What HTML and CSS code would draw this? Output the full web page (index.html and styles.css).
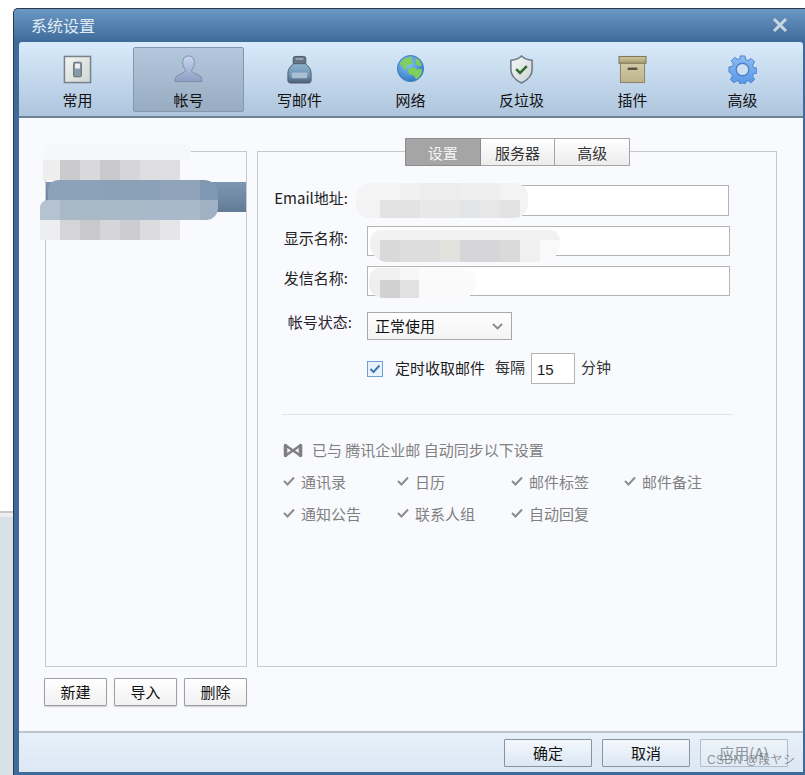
FILE: index.html
```html
<!DOCTYPE html>
<html lang="zh-CN">
<head>
<meta charset="utf-8">
<title>系统设置</title>
<link rel="stylesheet" href="styles.css">
</head>
<body>
<div class="backdrop"></div>
<div class="window">
  <header class="titlebar">
    <span class="title">系统设置</span>
    <svg class="close" width="16" height="16" viewBox="0 0 16 16"><path d="M2 2L14 14M14 2L2 14" stroke="#c8d6e3" stroke-width="3" fill="none"/></svg>
  </header>
  <nav class="toolbar">
    <div class="tool">
      <svg width="30" height="30" viewBox="0 0 30 30">
        <defs><linearGradient id="sw" x1="0" y1="0" x2="1" y2="1"><stop offset="0" stop-color="#f3f5f0"/><stop offset="1" stop-color="#cfd6d2"/></linearGradient></defs>
        <rect x="1.500" y="1.500" width="27" height="27" fill="url(#sw)" stroke="#78828e" stroke-width="1.600"/>
        <rect x="11" y="7.500" width="8" height="15" rx="1" fill="#8b9aa8" stroke="#5a6875"/>
        <rect x="12.500" y="9" width="5" height="5" fill="#eef1f2"/>
      </svg>
      <span>常用</span>
    </div>
    <div class="tool active">
      <svg width="30" height="30" viewBox="0 0 30 30">
        <defs><linearGradient id="us" x1="0" y1="0" x2="0" y2="1"><stop offset="0" stop-color="#c9d6f0"/><stop offset="1" stop-color="#8b9fc4"/></linearGradient></defs>
        <path d="M15 1c4 0 6 3 6 7 0 3-1 5-2.500 7-.7 1.500 0 2.500 2 3.500l6 3c2 1 2.500 3 2.500 6H1c0-3 .5-5 2.500-6l6-3c2-1 2.700-2 2-3.500C10 13 9 11 9 8c0-4 2-7 6-7z" fill="url(#us)" stroke="#7c8ba6"/>
      </svg>
      <span>帐号</span>
    </div>
    <div class="tool">
      <svg width="30" height="30" viewBox="0 0 30 30">
        <defs><linearGradient id="ink" x1="0" y1="0" x2="0" y2="1"><stop offset="0" stop-color="#8db4d0"/><stop offset=".6" stop-color="#6f93b0"/><stop offset="1" stop-color="#4b6078"/></linearGradient></defs>
        <rect x="8.500" y="1.500" width="13" height="9" rx="2" fill="#66748a" stroke="#4d586a"/>
        <rect x="11" y="3" width="8" height="2" fill="#9aa6b6"/>
        <path d="M9 9h12c4 3 6 6 6 10v7c0 2-1 3-3 3H6c-2 0-3-1-3-3v-7c0-4 2-7 6-10z" fill="url(#ink)" stroke="#505b6c"/>
        <rect x="7" y="18" width="16" height="6" rx="1" fill="#a9c0d2"/>
      </svg>
      <span>写邮件</span>
    </div>
    <div class="tool">
      <svg width="30" height="30" viewBox="0 0 30 30">
        <defs><radialGradient id="gl" cx=".4" cy=".3" r=".8"><stop offset="0" stop-color="#8cc4f2"/><stop offset="1" stop-color="#2670c4"/></radialGradient></defs>
        <circle cx="15" cy="14" r="13.500" fill="url(#gl)" stroke="#3d78b4"/>
        <path d="M4 9c3-5 7-7 12-7 1 2-1 4 1 5 2 2-2 3-4 3-3 0-2 2-2 4-1 3-3 0-4-2-1-1-2-1-3-3zM20 3c3 1 5 3 6 6 1 2 0 3-2 2-2 0-3-1-3-2-1-2 0-3-1-6zM13 14c3-2 8-1 9 1 2 0 4-1 5 0 0 4-2 8-6 10-2-1-1-3-3-4-2 0-5-1-5-3-1-2-1-3 0-4z" fill="#7ed05a"/>
      </svg>
      <span>网络</span>
    </div>
    <div class="tool">
      <svg width="30" height="30" viewBox="0 0 30 30">
        <defs><linearGradient id="sh" x1="0" y1="0" x2="1" y2="1"><stop offset="0" stop-color="#f7f9f6"/><stop offset="1" stop-color="#ccd3d6"/></linearGradient></defs>
        <path d="M15 1c3 3 7 4 11 4.500V15c0 7-5 11-11 14C9 26 4 22 4 15V5.500C8 5 12 4 15 1z" fill="url(#sh)" stroke="#6f7b88" stroke-width="1.600"/>
        <path d="M9.500 14.500l4 4 7-7" fill="none" stroke="#2f6b2c" stroke-width="2.600"/>
      </svg>
      <span>反垃圾</span>
    </div>
    <div class="tool">
      <svg width="30" height="30" viewBox="0 0 30 30">
        <defs>
          <linearGradient id="bx" x1="0" y1="0" x2="0" y2="1"><stop offset="0" stop-color="#d4ccaa"/><stop offset="1" stop-color="#bdb38b"/></linearGradient>
          <linearGradient id="lid" x1="0" y1="0" x2="0" y2="1"><stop offset="0" stop-color="#cfc79f"/><stop offset="1" stop-color="#a89d72"/></linearGradient>
        </defs>
        <rect x="2.500" y="7" width="25" height="21.500" fill="url(#bx)" stroke="#8a8263"/>
        <rect x="1" y="1.500" width="28" height="7" fill="url(#lid)" stroke="#7a7255"/>
        <rect x="10" y="13" width="10" height="2.500" fill="#55523f"/>
      </svg>
      <span>插件</span>
    </div>
    <div class="tool tool-last">
      <svg width="30" height="30" viewBox="0 0 30 30">
        <defs><linearGradient id="gr" x1="0" y1="0" x2="0" y2="1"><stop offset="0" stop-color="#8fbdf2"/><stop offset="1" stop-color="#5595e6"/></linearGradient></defs>
        <path d="M12.500 1h5l.8 3.800 2.400 1 3.300-2.100 3.500 3.500-2.100 3.300 1 2.400 3.600.8v5l-3.600.8-1 2.400 2.100 3.300-3.500 3.500-3.300-2.100-2.400 1-.8 3.400h-5l-.8-3.400-2.400-1-3.300 2.100-3.500-3.500 2.100-3.300-1-2.400L1 17.500v-5l3.600-.8 1-2.400-2.100-3.300L7 2.500l3.300 2.200 2.400-1z" fill="url(#gr)" stroke="#4a80cc" stroke-linejoin="round"/>
        <circle cx="15" cy="15" r="6.500" fill="#cfdff0" stroke="#4a80cc" stroke-width="1.400"/>
      </svg>
      <span>高级</span>
    </div>
  </nav>
  <main class="content">
    <section class="accounts">
      <div class="account-list"><div class="account-row"></div></div>
      <div class="account-actions">
        <button class="btn btn-small">新建</button>
        <button class="btn btn-small">导入</button>
        <button class="btn btn-small">删除</button>
      </div>
    </section>
    <section class="panel">
      <div class="tabs">
        <div class="tab tab-on">设置</div>
        <div class="tab">服务器</div>
        <div class="tab">高级</div>
      </div>
      <div class="row row-email"><label class="lab lab-email">Email地址:</label><div class="field"></div></div>
      <div class="row"><label class="lab">显示名称:</label><div class="field"></div></div>
      <div class="row"><label class="lab">发信名称:</label><div class="field"></div></div>
      <div class="row row-status">
        <label class="lab lab-status">帐号状态:</label>
        <div class="select">正常使用
          <svg width="11" height="7" viewBox="0 0 11 7"><path d="M1 1l4.500 4.500L10 1" fill="none" stroke="#8a8a8a" stroke-width="1.800"/></svg>
        </div>
      </div>
      <div class="row row-timer">
        <svg class="checkbox" width="16" height="16" viewBox="0 0 16 16"><rect x=".5" y=".5" width="15" height="15" fill="#eaf2fb" stroke="#6d9fd6"/><path d="M3.500 8l3 3 6-6.500" fill="none" stroke="#3d78bb" stroke-width="2"/></svg>
        <span class="timer-label">定时收取邮件</span>
        <span class="timer-every">每隔</span>
        <div class="minutes">15</div>
        <span class="timer-unit">分钟</span>
      </div>
      <hr class="divider">
      <div class="sync-head">
        <svg width="20" height="15" viewBox="0 0 20 15"><path d="M2.500 2.500V12.500M17.500 2.500V12.500" stroke="#808080" stroke-width="3.600" fill="none" stroke-linecap="round"/><path d="M2 2l16 11M18 2L2 13" stroke="#808080" stroke-width="2.400" fill="none"/></svg>
        <span>已与 腾讯企业邮 自动同步以下设置</span>
      </div>
      <ul class="sync-grid">
        <li><svg class="tick" width="12" height="10" viewBox="0 0 12 10"><path d="M1 5l3.500 3.500L11 1.500" fill="none" stroke="#8c8c8c" stroke-width="2"/></svg>通讯录</li>
        <li><svg class="tick" width="12" height="10" viewBox="0 0 12 10"><path d="M1 5l3.500 3.500L11 1.500" fill="none" stroke="#8c8c8c" stroke-width="2"/></svg>日历</li>
        <li><svg class="tick" width="12" height="10" viewBox="0 0 12 10"><path d="M1 5l3.500 3.500L11 1.500" fill="none" stroke="#8c8c8c" stroke-width="2"/></svg>邮件标签</li>
        <li><svg class="tick" width="12" height="10" viewBox="0 0 12 10"><path d="M1 5l3.500 3.500L11 1.500" fill="none" stroke="#8c8c8c" stroke-width="2"/></svg>邮件备注</li>
        <li><svg class="tick" width="12" height="10" viewBox="0 0 12 10"><path d="M1 5l3.500 3.500L11 1.500" fill="none" stroke="#8c8c8c" stroke-width="2"/></svg>通知公告</li>
        <li><svg class="tick" width="12" height="10" viewBox="0 0 12 10"><path d="M1 5l3.500 3.500L11 1.500" fill="none" stroke="#8c8c8c" stroke-width="2"/></svg>联系人组</li>
        <li><svg class="tick" width="12" height="10" viewBox="0 0 12 10"><path d="M1 5l3.500 3.500L11 1.500" fill="none" stroke="#8c8c8c" stroke-width="2"/></svg>自动回复</li>
      </ul>
    </section>
  </main>
  <footer class="footer">
    <button class="btn btn-wide">确定</button>
    <button class="btn btn-wide">取消</button>
    <button class="btn btn-wide btn-off">应用(A)</button>
  </footer>
</div>
<div class="mosaic m-a1"></div>
<div class="mosaic m-a2"></div>
<div class="mosaic m-a3"></div>
<div class="mosaic m-a4"></div>
<div class="mosaic m-a5"></div>
<div class="mosaic m-e1"></div>
<div class="mosaic m-e2"></div>
<div class="mosaic m-d1"></div>
<div class="mosaic m-d2"></div>
<div class="mosaic m-s1"></div>
<div class="mosaic m-s2"></div>
<div class="watermark">CSDN @段ヤシ</div>
</body>
</html>
```

FILE: styles.css
```css
* { box-sizing: border-box; }
html, body { margin: 0; padding: 0; height: 775px; overflow: hidden; background: #fff; }
body {
  position: relative;
  font: 15px/20px "Noto Sans CJK SC", "Liberation Sans", sans-serif;
  color: #1c1c1c;
}
.backdrop {
  position: absolute; left: 0; top: 511px; width: 13px; height: 264px;
  background: #d9e1e8;
  border-top: 2px solid #c8c8c8;
  box-shadow: inset 0 4px 0 #eeeeee;
}
.window {
  position: absolute; left: 13px; top: 8px; width: 792px; height: 767px;
  padding: 0 2px 3px 5px;
  display: flex; flex-direction: column;
  background: #3f6b9b;
  border-top: 1px solid #2b3a48;
  border-left: 1px solid #2b3a48;
  border-top-left-radius: 5px;
}
.titlebar {
  height: 33px; flex: none; margin-left: -5px; margin-right: -2px;
  padding: 0 17px 2px 17px;
  display: flex; align-items: center; justify-content: space-between;
  background: linear-gradient(#6a97c3, #3f6b9b);
  border-top-left-radius: 4px;
}
.title { color: #e0ebf4; font-size: 16px; }
.toolbar {
  height: 76px; flex: none; padding: 5px 0 0 3px;
  display: flex; align-items: flex-start;
  background: linear-gradient(#d9ebfb, #aec5dd);
  border-bottom: 2px solid #6d8096;
  border-radius: 3px 3px 0 0;
}
.tool {
  width: 111px; height: 65px; flex: none; padding-top: 7px;
  display: flex; flex-direction: column; align-items: center;
  border: 1px solid transparent;
  border-radius: 2px;
}
.tool-last { margin-left: -1px; }
.tool svg { display: block; height: 29px; width: 29px; }
.tool span { margin-top: 6px; line-height: 20px; color: #111; }
.tool.active {
  background: linear-gradient(#b3c8dc, #98acc2);
  border-color: #8397ad;
}
.content {
  flex: 1; min-height: 0; display: flex; align-items: flex-start;
  padding: 33px 0 0 25px;
  background: #f9fafe;
  border-bottom: 2px solid #bfc4ca;
}
.accounts { width: 202px; flex: none; margin-left: 1px; }
.account-list {
  height: 516px; padding-top: 30px;
  border: 1px solid #c9c9c9;
}
.account-row { height: 30px; background: linear-gradient(#7d97b3, #627b95); }
.account-actions { display: flex; justify-content: space-between; width: 203px; margin: 11px 0 0 -1px; }
.btn {
  font: inherit; color: #111; padding: 0;
  border: 1px solid #9f9f9f;
  border-radius: 1px;
  height: 28px;
}
.btn-small {
  width: 63px;
  background: linear-gradient(#ffffff, #f1f1f1);
  box-shadow: 0 1px 1px #cfcfcf;
}
.panel {
  width: 520px; height: 516px; flex: none; margin-left: 10px;
  border: 1px solid #c9c9c9;
  padding: 0 0 0 24px;
}
.tabs {
  display: flex; width: 225px; height: 28px; margin: -14px 0 19px 123px;
}
.tab {
  flex: 1; text-align: center; line-height: 27px; color: #333;
  background: linear-gradient(#ffffff, #ececec);
  border: 1px solid #a5a5a5; border-left: 0;
}
.tab-on {
  background: #a5a5a5; color: #f3f3f3; border: 1px solid #8d8d8d;
}
.row { display: flex; align-items: center; height: 30px; margin-bottom: 10px; }
.row-email { height: 31px; margin-left: -1px; }
.lab {
  width: 85px; flex: none; padding-right: 19px;
  text-align: right; white-space: nowrap; color: #222;
  position: relative; top: -3px;
}
.lab-email { width: 95px; margin-left: -10px; padding-right: 18px; }
.field { width: 363px; height: 100%; background: #fff; border: 1px solid #b4b4b4; }
.row-status { margin-top: 16px; margin-bottom: 13px; height: 28px; }
.lab-status { padding-right: 15px; top: -4px; color: #2b2130; }
.select {
  width: 145px; height: 28px; display: flex; align-items: center; justify-content: space-between;
  padding: 0 8px 0 7px;
  background: linear-gradient(#ffffff, #f3f3f3);
  border: 1px solid #a8a8a8;
  color: #111;
}
.row-timer { height: 31px; margin: 0 0 0 85px; }
.checkbox { flex: none; }
.timer-label { margin-left: 12px; position: relative; top: -1px; }
.timer-every { margin-left: 10px; position: relative; top: -2px; color: #333; }
.minutes {
  width: 44px; height: 31px; margin-left: 6px; padding-left: 5px;
  line-height: 31px; font-family: "Liberation Sans", sans-serif; font-size: 15px;
  background: #fff; border: 1px solid #b4b4b4;
}
.timer-unit { margin-left: 6px; position: relative; top: -2px; color: #333; }
.divider { width: 451px; height: 1px; margin: 30px 0 0 0; border: 0; background: #e2e4e9; }
.sync-head {
  display: flex; align-items: center; gap: 9px; margin: 25px 0 0 1px;
  color: #808080;
}
.sync-grid {
  list-style: none; margin: 12px 0 0 1px; padding: 0;
  display: grid; grid-template-columns: 114px 114px 113px 113px; grid-auto-rows: 32px;
  color: #808080;
}
.sync-grid li { display: flex; align-items: center; gap: 6px; height: 20px; }
.tick { flex: none; position: relative; top: -1px; }
.footer {
  height: 39px; flex: none; display: flex; justify-content: flex-end; align-items: center;
  gap: 10px; padding: 0 15px 0 0;
  background: linear-gradient(#e7f1fa, #dbe7f4);
}
.btn-wide {
  width: 88px; height: 28px;
  background: linear-gradient(#f4f8fc, #dae7f4);
  border: 1px solid #8a949e;
}
.btn-off { color: #8d959d; border-color: #b4bdc6; background: linear-gradient(#edf3f9, #e0eaf5); }
.mosaic { position: absolute; }
.m-a1 { left: 44px; top: 144px; width: 147px; height: 16px; background: #f6f7fa; border-radius: 8px 8px 0 0; }
.m-a2 { left: 43px; top: 160px; width: 137px; height: 20px;
  background: linear-gradient(90deg, #eeeeef 0 17px, #cbcbcd 17px 37px, #d9d9dc 37px 57px, #c9c9cb 57px 77px, #d6d6da 77px 97px, #dedee1 97px 137px); }
.m-a3 { left: 48px; top: 180px; width: 170px; height: 20px; border-radius: 10px 14px 0 0;
  background: linear-gradient(90deg, #8ba2b8 0 52px, #8aa1b8 52px 112px, #8fa3b9 112px 152px, #7f97b0 152px 170px); }
.m-a4 { left: 40px; top: 200px; width: 178px; height: 20px; border-radius: 8px 0 12px 0;
  background: linear-gradient(90deg, #b5c2cf 0 20px, #aab9c8 20px 100px, #a9b9c9 100px 160px, #a0b1c3 160px 178px); }
.m-a5 { left: 40px; top: 220px; width: 140px; height: 20px;
  background: linear-gradient(90deg, #edeef0 0 20px, #d5d5d8 20px 40px, #c9c9cb 40px 60px, #d6d6d9 60px 80px, #cdccd0 80px 100px, #dcdcdf 100px 120px, #e6e6e9 120px 140px); }
.m-e1 { left: 356px; top: 183px; width: 172px; height: 17px; border-radius: 14px 14px 0 0;
  background: linear-gradient(90deg, #f5f5f6 0 44px, #f1f1f2 44px 64px, #ededee 64px 104px, #efeff0 104px 144px, #f3f3f4 144px 172px); }
.m-e2 { left: 356px; top: 200px; width: 172px; height: 18px; border-radius: 0 0 14px 14px;
  background: linear-gradient(90deg, #f3f3f3 0 24px, #e3e3e3 24px 64px, #e8e8e8 64px 104px, #e3e4e5 104px 124px, #e7e7e7 124px 144px, #e3e3e3 144px 164px, #f3f3f3 164px 172px); }
.m-d1 { left: 370px; top: 230px; width: 190px; height: 10px; border-radius: 10px 10px 0 0; background: #f2f2f3; }
.m-d2 { left: 370px; top: 240px; width: 190px; height: 22px; border-radius: 0 0 18px 18px;
  background: linear-gradient(90deg, #f0f0f0 0 10px, #d9d9d9 10px 30px, #dddddd 30px 70px, #e2e2df 70px 90px, #d6d6d8 90px 130px, #dadadb 130px 150px, #f0f0f0 150px 170px, #f8f9f8 170px 190px); }
.m-s1 { left: 369px; top: 268px; width: 107px; height: 12px; border-radius: 12px 14px 0 0;
  background: linear-gradient(90deg, #f0f0f0 0 31px, #f6f6f6 31px 50px, #fbfbfb 50px 107px); }
.m-s2 { left: 369px; top: 280px; width: 107px; height: 18px; border-radius: 0 0 14px 14px;
  background: linear-gradient(90deg, #eeeeee 0 11px, #d1d1d1 11px 31px, #e1e1e1 31px 50px, #f9faf9 50px 107px); }
.watermark {
  position: absolute; left: 707px; top: 751px; font-size: 12px; line-height: 18px;
  color: rgba(90, 90, 90, .62); white-space: nowrap; letter-spacing: .3px;
  font-family: "Liberation Sans", "Noto Sans CJK SC", sans-serif;
}
```
